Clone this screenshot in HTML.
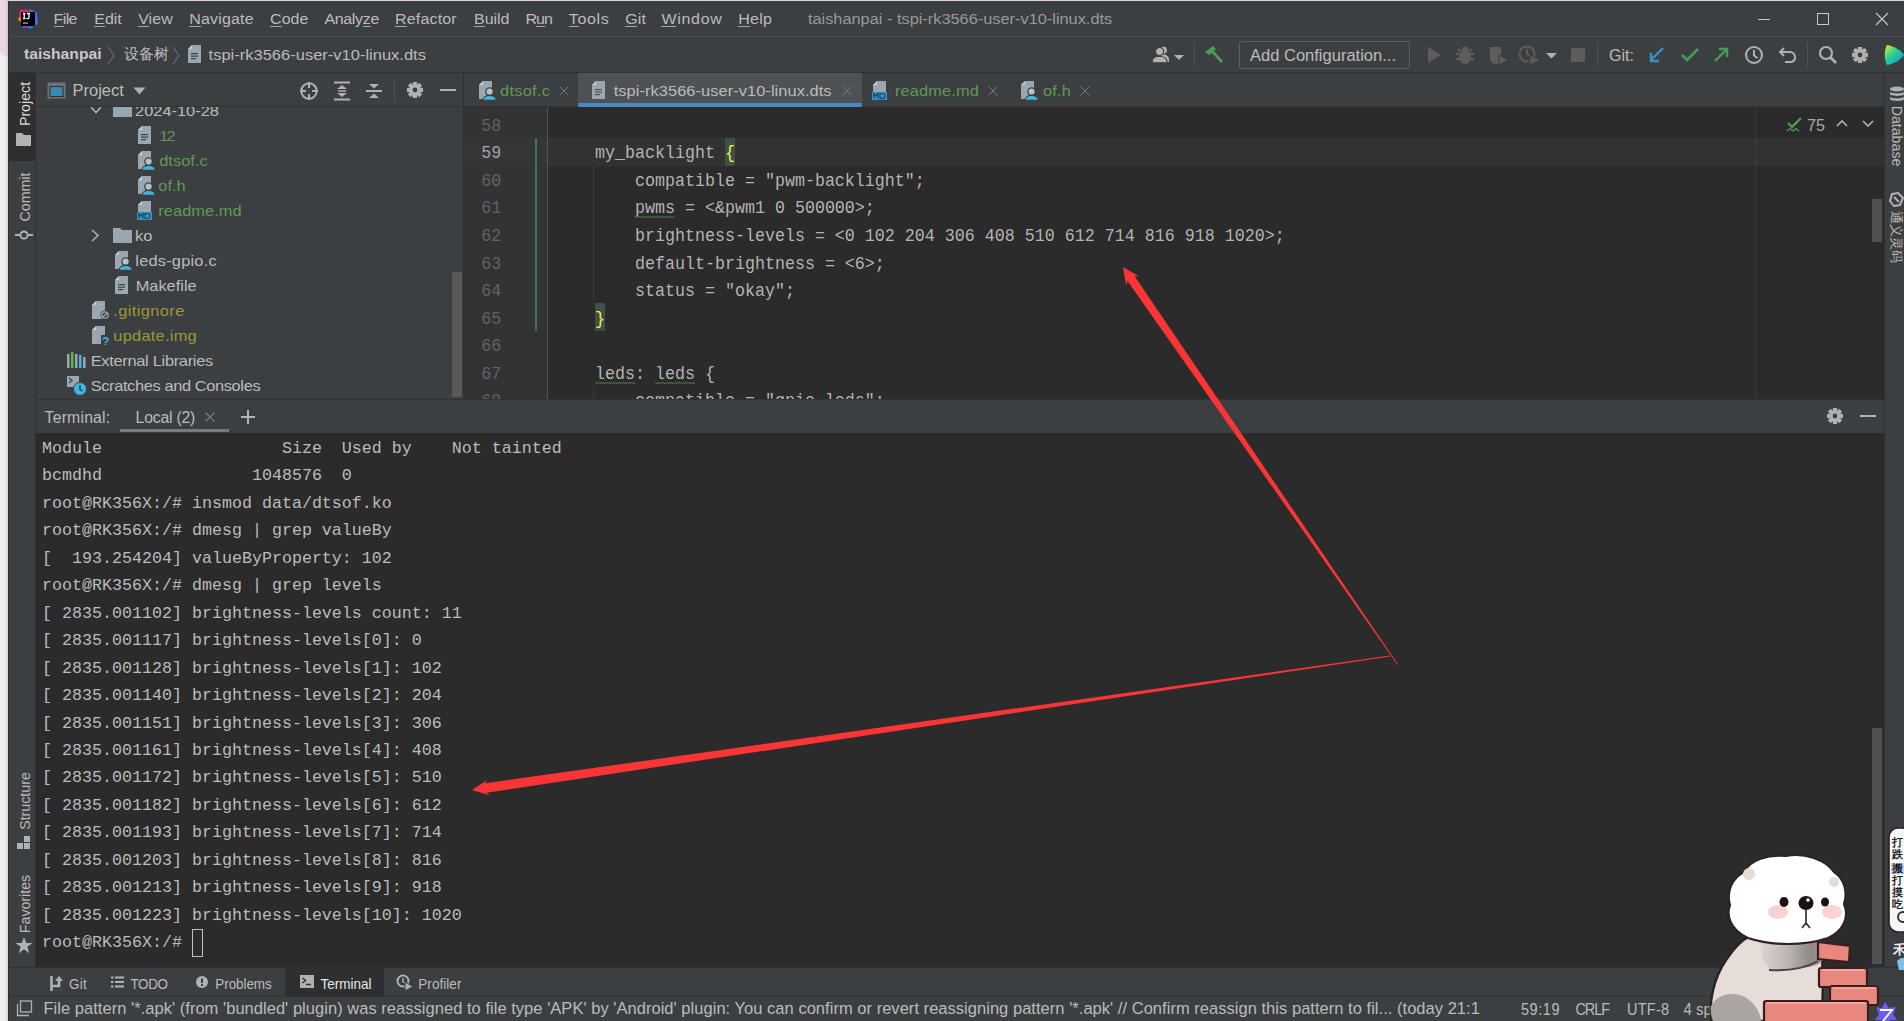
<!DOCTYPE html>
<html><head><meta charset="utf-8">
<style>
*{margin:0;padding:0;box-sizing:border-box}
html,body{width:1904px;height:1021px;overflow:hidden;background:#ecdde5;font-family:"Liberation Sans",sans-serif;}
.a{position:absolute}
.t{font-family:"Liberation Sans",sans-serif;white-space:pre;color:#bbbbbb}
.m{font-family:"Liberation Mono",monospace;white-space:pre;color:#bbbbbb}
.br{color:#ffef28}
.sq{text-decoration:underline wavy #4f7a47 1px;text-underline-offset:3px}
</style></head>
<body>
<div class="a" style="left:0px;top:0px;width:8px;height:1021px;background:#eeeded;"></div>
<div class="a" style="left:0px;top:0px;width:8px;height:56px;background:#e9d8e2;border-bottom-left-radius:6px"></div>
<div class="a" style="left:0px;top:0px;width:1904px;height:1px;background:#e6d2dd;"></div>
<div class="a" style="left:5px;top:0px;width:3px;height:1021px;background:linear-gradient(90deg,rgba(0,0,0,0),rgba(0,0,0,0.10));"></div>
<div class="a" style="left:8px;top:1px;width:1896px;height:1020px;background:#3c3f41;"></div>
<div class="a" style="left:8px;top:1px;width:1px;height:1020px;background:#2f3133;"></div>
<div class="a" style="left:9px;top:36px;width:1895px;height:1px;background:#4b4d4e;"></div>
<div class="a" style="left:9px;top:72px;width:1895px;height:1px;background:#323232;"></div>
<div class="a t" style="left:53.6px;top:-0.60px;height:40px;line-height:40px;font-size:16.00px;color:#bbbbbb;transform:scaleY(0.960);transform-origin:0 50%;letter-spacing:-0.628px;">File</div>
<div class="a" style="left:54px;top:26px;width:10px;height:1px;background:#a9a9a9;"></div>
<div class="a t" style="left:94.3px;top:-0.60px;height:40px;line-height:40px;font-size:16.00px;color:#bbbbbb;transform:scaleY(0.960);transform-origin:0 50%;letter-spacing:-0.024px;">Edit</div>
<div class="a" style="left:94px;top:26px;width:11px;height:1px;background:#a9a9a9;"></div>
<div class="a t" style="left:138.2px;top:-0.60px;height:40px;line-height:40px;font-size:16.00px;color:#bbbbbb;transform:scaleY(0.960);transform-origin:0 50%;letter-spacing:0.036px;">View</div>
<div class="a" style="left:138px;top:26px;width:11px;height:1px;background:#a9a9a9;"></div>
<div class="a t" style="left:189.3px;top:-0.60px;height:40px;line-height:40px;font-size:16.00px;color:#bbbbbb;transform:scaleY(0.960);transform-origin:0 50%;letter-spacing:0.164px;">Navigate</div>
<div class="a" style="left:189px;top:26px;width:12px;height:1px;background:#a9a9a9;"></div>
<div class="a t" style="left:270.0px;top:-0.60px;height:40px;line-height:40px;font-size:16.00px;color:#bbbbbb;transform:scaleY(0.960);transform-origin:0 50%;letter-spacing:0.083px;">Code</div>
<div class="a" style="left:270px;top:26px;width:12px;height:1px;background:#a9a9a9;"></div>
<div class="a t" style="left:324.4px;top:-0.60px;height:40px;line-height:40px;font-size:16.00px;color:#bbbbbb;transform:scaleY(0.960);transform-origin:0 50%;letter-spacing:-0.337px;">Analyze</div>
<div class="a" style="left:363px;top:26px;width:8px;height:1px;background:#a9a9a9;"></div>
<div class="a t" style="left:395.1px;top:-0.60px;height:40px;line-height:40px;font-size:16.00px;color:#bbbbbb;transform:scaleY(0.960);transform-origin:0 50%;letter-spacing:0.147px;">Refactor</div>
<div class="a" style="left:395px;top:26px;width:12px;height:1px;background:#a9a9a9;"></div>
<div class="a t" style="left:474.0px;top:-0.60px;height:40px;line-height:40px;font-size:16.00px;color:#bbbbbb;transform:scaleY(0.960);transform-origin:0 50%;letter-spacing:-0.045px;">Build</div>
<div class="a" style="left:474px;top:26px;width:11px;height:1px;background:#a9a9a9;"></div>
<div class="a t" style="left:525.6px;top:-0.60px;height:40px;line-height:40px;font-size:16.00px;color:#bbbbbb;transform:scaleY(0.960);transform-origin:0 50%;letter-spacing:-1.076px;">Run</div>
<div class="a" style="left:536px;top:26px;width:9px;height:1px;background:#a9a9a9;"></div>
<div class="a t" style="left:568.8px;top:-0.60px;height:40px;line-height:40px;font-size:16.00px;color:#bbbbbb;transform:scaleY(0.960);transform-origin:0 50%;letter-spacing:0.662px;">Tools</div>
<div class="a" style="left:569px;top:26px;width:10px;height:1px;background:#a9a9a9;"></div>
<div class="a t" style="left:625.2px;top:-0.60px;height:40px;line-height:40px;font-size:16.00px;color:#bbbbbb;transform:scaleY(0.960);transform-origin:0 50%;letter-spacing:0.177px;">Git</div>
<div class="a" style="left:625px;top:26px;width:12px;height:1px;background:#a9a9a9;"></div>
<div class="a t" style="left:661.4px;top:-0.60px;height:40px;line-height:40px;font-size:16.00px;color:#bbbbbb;transform:scaleY(0.960);transform-origin:0 50%;letter-spacing:0.698px;">Window</div>
<div class="a" style="left:661px;top:26px;width:15px;height:1px;background:#a9a9a9;"></div>
<div class="a t" style="left:738.2px;top:-0.60px;height:40px;line-height:40px;font-size:16.00px;color:#bbbbbb;transform:scaleY(0.960);transform-origin:0 50%;letter-spacing:0.297px;">Help</div>
<div class="a" style="left:738px;top:26px;width:12px;height:1px;background:#a9a9a9;"></div>
<div class="a t" style="left:807.9px;top:-1.20px;height:40px;line-height:40px;font-size:16.35px;color:#999999;transform:scaleY(0.887);transform-origin:0 50%;">taishanpai - tspi-rk3566-user-v10-linux.dts</div>
<svg class="a" style="left:17px;top:8px" width="22" height="22" viewBox="0 0 22 22">
<polygon points="3,2 10,1.5 13,4 8,9 2,9" fill="#f21d6b"/>
<polygon points="1,10 6,8 6,14 2,13" fill="#f97a12"/>
<polygon points="12.5,1 20,4.5 21,16 13,21 9,18" fill="#3d6ff2"/>
<polygon points="4,15 10,14 12,19 6,20" fill="#a53ce0"/>
<rect x="4" y="4" width="14" height="14" fill="#000"/>
<path d="M6 5.5H8.5M7.2 5.5V10.5M6 10.5H8.5M10 5.5H13M12 5.5V9.5C12 11 10 11 9.5 10" stroke="#fff" stroke-width="1.3" fill="none"/>
<rect x="6" y="14.5" width="5" height="1.2" fill="#bbb"/></svg>
<div class="a" style="left:1758px;top:19px;width:12px;height:1px;background:#c8c8c8;"></div>
<div class="a" style="left:1817px;top:13px;width:12px;height:12px;background:transparent;border:1px solid #c8c8c8"></div>
<svg class="a" style="left:1875px;top:12px" width="14" height="14" viewBox="0 0 14 14"><path d="M1 1L13 13M13 1L1 13" stroke="#c8c8c8" stroke-width="1.1"/></svg>
<div class="a t" style="left:24.0px;top:34.40px;height:40px;line-height:40px;font-size:15.69px;color:#c8c8c8;font-weight:bold;transform:scaleY(0.979);transform-origin:0 50%;">taishanpai</div>
<svg class="a" style="left:107px;top:46px" width="9" height="19" viewBox="0 0 9 19"><path d="M1 1L7 9.5L1 18" stroke="#6e6e6e" stroke-width="1.1" fill="none"/></svg>
<div class="a t" style="left:123.5px;top:42px;height:24px;line-height:24px;font-size:14.7px;color:#bbbbbb">设备树</div>
<svg class="a" style="left:172px;top:46px" width="9" height="19" viewBox="0 0 9 19"><path d="M1 1L7 9.5L1 18" stroke="#6e6e6e" stroke-width="1.1" fill="none"/></svg>
<svg class="a" style="left:188px;top:45px" width="13" height="18" viewBox="0 0 13 18"><path d="M4 0H13V18H0V4Z" fill="#9aa7b0"/><path d="M0 4H4V0Z" fill="#c3ccd2"/><rect x="3" y="8" width="7" height="1.2" fill="#3c3f41"/><rect x="3" y="10.5" width="7" height="1.2" fill="#3c3f41"/><rect x="3" y="13" width="5" height="1.2" fill="#3c3f41"/></svg>
<div class="a t" style="left:208.6px;top:34.60px;height:40px;line-height:40px;font-size:16.50px;color:#bbbbbb;transform:scaleY(0.914);transform-origin:0 50%;">tspi-rk3566-user-v10-linux.dts</div>
<svg class="a" style="left:1152px;top:46px" width="34" height="18" viewBox="0 0 34 18"><circle cx="11.5" cy="4.2" r="3.4" fill="#afb1b3"/><path d="M9 16V10.5C9 9 10 8.5 11.5 8.5C14.5 8.5 17 10.5 17 13.5V16Z" fill="#afb1b3"/>
<circle cx="7.5" cy="5.5" r="4.1" fill="#afb1b3" stroke="#3c3f41" stroke-width="1.2"/><path d="M0 16.8C0 12.5 3 10.5 6 10.5H9C12 10.5 15 12.5 15 16.8Z" fill="#afb1b3" stroke="#3c3f41" stroke-width="1.2"/>
<path d="M22 9H32L27 14Z" fill="#afb1b3"/></svg>
<div class="a" style="left:1194px;top:43px;width:1px;height:24px;background:#515151;"></div>
<svg class="a" style="left:1204px;top:45px" width="22" height="20" viewBox="0 0 22 20"><path d="M1 7L9 1L12 4L10 6L19 16L17 18L8 8L5 10Z" fill="#499c54"/></svg>
<div class="a" style="left:1239px;top:41px;width:171px;height:28px;background:transparent;border:1px solid #5e6060;border-radius:3px"></div>
<div class="a t" style="left:1250.0px;top:35.50px;height:40px;line-height:40px;font-size:16.52px;color:#bbbbbb;transform:scaleY(0.965);transform-origin:0 50%;">Add Configuration...</div>
<svg class="a" style="left:1426px;top:46px" width="16" height="18" viewBox="0 0 16 18"><path d="M2 1L15 9L2 17Z" fill="#5b5d5f"/></svg>
<svg class="a" style="left:1455px;top:45px" width="20" height="20" viewBox="0 0 20 20"><ellipse cx="10" cy="12" rx="6" ry="7" fill="#5b5d5f"/><circle cx="10" cy="5" r="3.5" fill="#5b5d5f"/><path d="M1 9H19M1 14H19M3 4L6 7M17 4L14 7" stroke="#5b5d5f" stroke-width="2"/></svg>
<svg class="a" style="left:1488px;top:45px" width="22" height="22" viewBox="0 0 22 22"><path d="M2 2H13V14C13 17 9 19 7.5 19C6 19 2 17 2 14Z" fill="#5b5d5f"/><path d="M11 10L20 15L11 20Z" fill="#5b5d5f" stroke="#3c3f41"/></svg>
<svg class="a" style="left:1518px;top:44px" width="24" height="22" viewBox="0 0 24 22"><circle cx="9" cy="10" r="7.5" fill="none" stroke="#5b5d5f" stroke-width="2"/><path d="M9 5V10L12 12" stroke="#5b5d5f" stroke-width="2" fill="none"/><path d="M12 11L22 16L12 21Z" fill="#5b5d5f" stroke="#3c3f41"/></svg>
<svg class="a" style="left:1546px;top:52px" width="12" height="7" viewBox="0 0 12 7"><path d="M0 1H11L5.5 6.5Z" fill="#afb1b3"/></svg>
<div class="a" style="left:1571px;top:48px;width:14px;height:14px;background:#5b5d5f;"></div>
<div class="a" style="left:1597px;top:43px;width:1px;height:24px;background:#515151;"></div>
<div class="a t" style="left:1609.0px;top:35.20px;height:40px;line-height:40px;font-size:16.07px;color:#bbbbbb;transform:scaleY(0.992);transform-origin:0 50%;">Git:</div>
<svg class="a" style="left:1648px;top:46px" width="18" height="18" viewBox="0 0 18 18"><path d="M15 2L3 14M3 7V15H11" stroke="#3592c4" stroke-width="2.4" fill="none"/></svg>
<svg class="a" style="left:1680px;top:47px" width="20" height="16" viewBox="0 0 20 16"><path d="M2 8L7 13L18 2" stroke="#499c54" stroke-width="2.6" fill="none"/></svg>
<svg class="a" style="left:1712px;top:46px" width="18" height="18" viewBox="0 0 18 18"><path d="M3 15L15 3M7 3H15V11" stroke="#499c54" stroke-width="2.4" fill="none"/></svg>
<svg class="a" style="left:1744px;top:45px" width="20" height="20" viewBox="0 0 20 20"><circle cx="10" cy="10" r="8" fill="none" stroke="#afb1b3" stroke-width="2"/><path d="M10 5V10.5L13.5 13" stroke="#afb1b3" stroke-width="2" fill="none"/></svg>
<svg class="a" style="left:1778px;top:45px" width="20" height="20" viewBox="0 0 20 20"><path d="M6 3L2 7L6 11M2 7H12C15 7 17 9.5 17 12C17 15 15 17 12 17H7" stroke="#afb1b3" stroke-width="2" fill="none"/></svg>
<div class="a" style="left:1807px;top:43px;width:1px;height:24px;background:#515151;"></div>
<svg class="a" style="left:1818px;top:45px" width="20" height="20" viewBox="0 0 20 20"><circle cx="8" cy="8" r="6" fill="none" stroke="#afb1b3" stroke-width="2.2"/><path d="M12.5 12.5L18 18" stroke="#afb1b3" stroke-width="2.6"/></svg>
<svg class="a" style="left:1852px;top:47px" width="16" height="16" viewBox="0 0 16 16"><rect x="5.90" y="0" width="4.2" height="4.48" fill="#afb1b3" transform="rotate(0 8.0 8.0)"/><rect x="5.90" y="0" width="4.2" height="4.48" fill="#afb1b3" transform="rotate(45 8.0 8.0)"/><rect x="5.90" y="0" width="4.2" height="4.48" fill="#afb1b3" transform="rotate(90 8.0 8.0)"/><rect x="5.90" y="0" width="4.2" height="4.48" fill="#afb1b3" transform="rotate(135 8.0 8.0)"/><rect x="5.90" y="0" width="4.2" height="4.48" fill="#afb1b3" transform="rotate(180 8.0 8.0)"/><rect x="5.90" y="0" width="4.2" height="4.48" fill="#afb1b3" transform="rotate(225 8.0 8.0)"/><rect x="5.90" y="0" width="4.2" height="4.48" fill="#afb1b3" transform="rotate(270 8.0 8.0)"/><rect x="5.90" y="0" width="4.2" height="4.48" fill="#afb1b3" transform="rotate(315 8.0 8.0)"/><circle cx="8.0" cy="8.0" r="5.76" fill="#afb1b3"/><circle cx="8.0" cy="8.0" r="2.40" fill="#3c3f41"/></svg>
<svg class="a" style="left:1884px;top:44px" width="20" height="22" viewBox="0 0 20 22"><defs><linearGradient id="lg1" x1="0" y1="0" x2="1" y2="1"><stop offset="0" stop-color="#f5e92a"/><stop offset=".4" stop-color="#2fd38b"/><stop offset="1" stop-color="#0d8ae6"/></linearGradient></defs><path d="M3 1C10 2 18 7 20 11C18 15 10 20 3 21C0 16 0 6 3 1Z" fill="url(#lg1)"/></svg>
<div class="a" style="left:9px;top:73px;width:27px;height:895px;background:#3c3f41;"></div>
<div class="a" style="left:35px;top:73px;width:1px;height:895px;background:#323232;"></div>
<div class="a" style="left:9px;top:73px;width:26px;height:88px;background:#2d2f30;"></div>
<div class="a t" style="left:24.5px;top:103.5px;height:23px;line-height:23px;font-size:14.2px;color:#dddddd;transform:translate(-50%,-50%) rotate(-90deg)">Project</div>
<svg class="a" style="left:16px;top:133px" width="16" height="13" viewBox="0 0 16 13"><path d="M0 0H6L8 2H15V13H0Z" fill="#afb1b3"/></svg>
<div class="a t" style="left:24.5px;top:196.5px;height:23px;line-height:23px;font-size:14.2px;color:#bbbbbb;transform:translate(-50%,-50%) rotate(-90deg)">Commit</div>
<svg class="a" style="left:15px;top:229px" width="18" height="12" viewBox="0 0 18 12"><circle cx="9" cy="6" r="3.6" fill="none" stroke="#afb1b3" stroke-width="2"/><path d="M0 6H5M13 6H18" stroke="#afb1b3" stroke-width="2"/></svg>
<div class="a t" style="left:24.5px;top:801px;height:23px;line-height:23px;font-size:14.2px;color:#bbbbbb;transform:translate(-50%,-50%) rotate(-90deg)">Structure</div>
<svg class="a" style="left:17px;top:836px" width="14" height="14" viewBox="0 0 14 14"><rect x="7" y="0" width="6" height="6" fill="#afb1b3"/><rect x="0" y="7" width="6" height="6" fill="#afb1b3"/><rect x="7" y="7" width="6" height="6" fill="#afb1b3"/></svg>
<div class="a t" style="left:24.5px;top:904px;height:23px;line-height:23px;font-size:14.2px;color:#bbbbbb;transform:translate(-50%,-50%) rotate(-90deg)">Favorites</div>
<svg class="a" style="left:15px;top:937px" width="18" height="17" viewBox="0 0 18 17"><path d="M9 0L11.2 6H17.5L12.4 9.8L14.3 16.2L9 12.3L3.7 16.2L5.6 9.8L0.5 6H6.8Z" fill="#afb1b3"/></svg>
<div class="a" style="left:36px;top:106px;width:428px;height:1px;background:#323232;"></div>
<div class="a" style="left:463px;top:73px;width:1px;height:327px;background:#323232;"></div>
<svg class="a" style="left:47px;top:82px" width="19" height="17" viewBox="0 0 19 17"><rect x="0.5" y="0.5" width="18" height="16" fill="#6e7476"/><rect x="2.5" y="4" width="14" height="11" fill="#2c2e2f"/><rect x="3.5" y="5" width="12" height="9" fill="#3b8bb0"/></svg>
<div class="a t" style="left:72.5px;top:69.80px;height:40px;line-height:40px;font-size:16.48px;color:#bbbbbb;transform:scaleY(0.967);transform-origin:0 50%;">Project</div>
<svg class="a" style="left:133px;top:87px" width="13" height="8" viewBox="0 0 13 8"><path d="M0.5 0.5H12.5L6.5 7.5Z" fill="#afb1b3"/></svg>
<svg class="a" style="left:299px;top:81px" width="20" height="20" viewBox="0 0 20 20"><circle cx="10" cy="10" r="7.7" fill="none" stroke="#afb1b3" stroke-width="2"/><path d="M10 1V7M10 13V19M1 10H7M13 10H19" stroke="#afb1b3" stroke-width="2"/></svg>
<svg class="a" style="left:333px;top:81px" width="18" height="20" viewBox="0 0 18 20"><path d="M1 1.5H17M1 18.5H17" stroke="#afb1b3" stroke-width="2.2"/><path d="M4 8L9 4L14 8ZM4 12L9 16L14 12Z" fill="#afb1b3"/><path d="M5 10H13" stroke="#afb1b3" stroke-width="1.5"/></svg>
<svg class="a" style="left:365px;top:81px" width="18" height="20" viewBox="0 0 18 20"><path d="M1 10H17" stroke="#afb1b3" stroke-width="2"/><path d="M4 3L9 7.5L14 3ZM4 17L9 12.5L14 17Z" fill="#afb1b3"/></svg>
<div class="a" style="left:394px;top:80px;width:1px;height:22px;background:#515151;"></div>
<svg class="a" style="left:407px;top:82px" width="16" height="16" viewBox="0 0 16 16"><rect x="5.90" y="0" width="4.2" height="4.48" fill="#afb1b3" transform="rotate(0 8.0 8.0)"/><rect x="5.90" y="0" width="4.2" height="4.48" fill="#afb1b3" transform="rotate(45 8.0 8.0)"/><rect x="5.90" y="0" width="4.2" height="4.48" fill="#afb1b3" transform="rotate(90 8.0 8.0)"/><rect x="5.90" y="0" width="4.2" height="4.48" fill="#afb1b3" transform="rotate(135 8.0 8.0)"/><rect x="5.90" y="0" width="4.2" height="4.48" fill="#afb1b3" transform="rotate(180 8.0 8.0)"/><rect x="5.90" y="0" width="4.2" height="4.48" fill="#afb1b3" transform="rotate(225 8.0 8.0)"/><rect x="5.90" y="0" width="4.2" height="4.48" fill="#afb1b3" transform="rotate(270 8.0 8.0)"/><rect x="5.90" y="0" width="4.2" height="4.48" fill="#afb1b3" transform="rotate(315 8.0 8.0)"/><circle cx="8.0" cy="8.0" r="5.76" fill="#afb1b3"/><circle cx="8.0" cy="8.0" r="2.40" fill="#3c3f41"/></svg>
<div class="a" style="left:440px;top:89px;width:16px;height:2px;background:#afb1b3;"></div>
<div class="a" style="left:36px;top:107px;width:427px;height:292px;overflow:hidden"><div style="position:absolute;left:-36px;top:-107px">
<svg class="a" style="left:90px;top:106px" width="12" height="8" viewBox="0 0 12 8"><path d="M1 1L6 6.5L11 1" stroke="#afb1b3" stroke-width="1.6" fill="none"/></svg>
<svg class="a" style="left:113px;top:101px" width="19" height="16" viewBox="0 0 19 16"><path d="M0 1H7L9 3H19V16H0Z" fill="#9aa7b0"/></svg>
<div class="a t" style="left:135.0px;top:89.60px;height:40px;line-height:40px;font-size:16.40px;color:#bbbbbb;transform:scaleY(0.928);transform-origin:0 50%;letter-spacing:0.012px;">2024-10-28</div>
<svg class="a" style="left:136.5px;top:125px" width="20" height="20" viewBox="-1 -1 20 20"><path d="M4 0H13V18H0V4Z" fill="#9aa7b0"/><path d="M0 4H4V0Z" fill="#c3ccd2"/><rect x="3" y="8" width="7" height="1.2" fill="#3c3f41"/><rect x="3" y="10.5" width="7" height="1.2" fill="#3c3f41"/><rect x="3" y="13" width="5" height="1.2" fill="#3c3f41"/></svg>
<div class="a t" style="left:159.2px;top:114.60px;height:40px;line-height:40px;font-size:16.40px;color:#629755;transform:scaleY(0.928);transform-origin:0 50%;letter-spacing:-1.842px;">12</div>
<svg class="a" style="left:136.5px;top:150px" width="20" height="20" viewBox="-1 -1 20 20"><path d="M4 0H13V18H0V4Z" fill="#9aa7b0"/><path d="M0 4H4V0Z" fill="#c3ccd2"/><circle cx="10.6" cy="10.6" r="4.4" fill="#3c3f41"/><circle cx="10.6" cy="10.6" r="3.1" fill="#b9c0c5"/><path d="M4 19.3C4 16.2 7 14.4 10.6 14.4C14.2 14.4 17.2 16.2 17.2 19.3Z" fill="#40b6e0" stroke="#3c3f41" stroke-width="1.1"/></svg>
<div class="a t" style="left:159.2px;top:139.60px;height:40px;line-height:40px;font-size:16.40px;color:#629755;transform:scaleY(0.928);transform-origin:0 50%;letter-spacing:0.032px;">dtsof.c</div>
<svg class="a" style="left:136.5px;top:175px" width="20" height="20" viewBox="-1 -1 20 20"><path d="M4 0H13V18H0V4Z" fill="#9aa7b0"/><path d="M0 4H4V0Z" fill="#c3ccd2"/><circle cx="10.6" cy="10.6" r="4.4" fill="#3c3f41"/><circle cx="10.6" cy="10.6" r="3.1" fill="#b9c0c5"/><path d="M4 19.3C4 16.2 7 14.4 10.6 14.4C14.2 14.4 17.2 16.2 17.2 19.3Z" fill="#40b6e0" stroke="#3c3f41" stroke-width="1.1"/></svg>
<div class="a t" style="left:158.3px;top:164.60px;height:40px;line-height:40px;font-size:16.40px;color:#629755;transform:scaleY(0.928);transform-origin:0 50%;letter-spacing:0.015px;">of.h</div>
<svg class="a" style="left:136.5px;top:200px" width="20" height="20" viewBox="-1 -1 20 20"><path d="M4 0H13V18H0V4Z" fill="#9aa7b0"/><path d="M0 4H4V0Z" fill="#c3ccd2"/><rect x="-1" y="11" width="15" height="8" fill="#3592c4"/><path d="M1 17.5V12.5L3 15L5 12.5V17.5M7 12.5V17.5H9.5C11.5 17.5 12 16 12 15C12 14 11.5 12.5 9.5 12.5Z" stroke="#1d4058" stroke-width="1.1" fill="none"/></svg>
<div class="a t" style="left:158.3px;top:189.60px;height:40px;line-height:40px;font-size:16.40px;color:#629755;transform:scaleY(0.928);transform-origin:0 50%;letter-spacing:0.056px;">readme.md</div>
<svg class="a" style="left:114px;top:250px" width="20" height="20" viewBox="-1 -1 20 20"><path d="M4 0H13V18H0V4Z" fill="#9aa7b0"/><path d="M0 4H4V0Z" fill="#c3ccd2"/><circle cx="10.6" cy="10.6" r="4.4" fill="#3c3f41"/><circle cx="10.6" cy="10.6" r="3.1" fill="#b9c0c5"/><path d="M4 19.3C4 16.2 7 14.4 10.6 14.4C14.2 14.4 17.2 16.2 17.2 19.3Z" fill="#40b6e0" stroke="#3c3f41" stroke-width="1.1"/></svg>
<div class="a t" style="left:135.3px;top:239.60px;height:40px;line-height:40px;font-size:16.40px;color:#bbbbbb;transform:scaleY(0.928);transform-origin:0 50%;letter-spacing:0.209px;">leds-gpio.c</div>
<svg class="a" style="left:114px;top:275px" width="20" height="20" viewBox="-1 -1 20 20"><path d="M4 0H13V18H0V4Z" fill="#9aa7b0"/><path d="M0 4H4V0Z" fill="#c3ccd2"/><rect x="3" y="8" width="7" height="1.2" fill="#3c3f41"/><rect x="3" y="10.5" width="7" height="1.2" fill="#3c3f41"/><rect x="3" y="13" width="5" height="1.2" fill="#3c3f41"/></svg>
<div class="a t" style="left:135.7px;top:264.60px;height:40px;line-height:40px;font-size:16.40px;color:#bbbbbb;transform:scaleY(0.928);transform-origin:0 50%;letter-spacing:-0.010px;">Makefile</div>
<svg class="a" style="left:91px;top:300px" width="20" height="20" viewBox="-1 -1 20 20"><path d="M4 0H13V18H0V4Z" fill="#9aa7b0"/><path d="M0 4H4V0Z" fill="#c3ccd2"/><circle cx="13" cy="14" r="4.6" fill="#3c3f41"/><circle cx="13" cy="14" r="3.2" fill="none" stroke="#9aa7b0" stroke-width="1.3"/><path d="M10.7 16.3L15.3 11.7" stroke="#9aa7b0" stroke-width="1.3"/></svg>
<div class="a t" style="left:113.3px;top:289.60px;height:40px;line-height:40px;font-size:16.40px;color:#999a35;transform:scaleY(0.928);transform-origin:0 50%;letter-spacing:0.392px;">.gitignore</div>
<svg class="a" style="left:91px;top:325px" width="20" height="20" viewBox="-1 -1 20 20"><path d="M4 0H13V18H0V4Z" fill="#9aa7b0"/><path d="M0 4H4V0Z" fill="#c3ccd2"/><rect x="9" y="9" width="10" height="11" fill="#3c3f41"/><text x="10" y="20" font-family="Liberation Sans" font-size="12" font-weight="bold" fill="#40b6e0">?</text></svg>
<div class="a t" style="left:113.3px;top:314.60px;height:40px;line-height:40px;font-size:16.40px;color:#999a35;transform:scaleY(0.928);transform-origin:0 50%;letter-spacing:0.251px;">update.img</div>
<svg class="a" style="left:90px;top:229px" width="10" height="13" viewBox="0 0 10 13"><path d="M2 1L8 6.5L2 12" stroke="#afb1b3" stroke-width="1.6" fill="none"/></svg>
<svg class="a" style="left:113px;top:227px" width="19" height="16" viewBox="0 0 19 16"><path d="M0 1H7L9 3H19V16H0Z" fill="#9aa7b0"/></svg>
<div class="a t" style="left:135.0px;top:214.60px;height:40px;line-height:40px;font-size:16.40px;color:#bbbbbb;transform:scaleY(0.928);transform-origin:0 50%;letter-spacing:-0.021px;">ko</div>
<svg class="a" style="left:67px;top:351px" width="19" height="18" viewBox="0 0 19 18"><rect x="0" y="3" width="2.5" height="14" fill="#9aa7b0"/><rect x="4" y="1" width="2.5" height="16" fill="#62b543"/><rect x="8" y="3" width="2.5" height="14" fill="#9aa7b0"/><rect x="12" y="4" width="2.5" height="13" fill="#40b6e0"/><rect x="16" y="6" width="2.5" height="11" fill="#9aa7b0"/></svg>
<div class="a t" style="left:90.7px;top:339.60px;height:40px;line-height:40px;font-size:16.40px;color:#bbbbbb;transform:scaleY(0.928);transform-origin:0 50%;letter-spacing:-0.295px;">External Libraries</div>
<svg class="a" style="left:66px;top:375px" width="21" height="21" viewBox="0 0 21 21"><rect x="1" y="1" width="12" height="11" fill="#9aa7b0"/><path d="M3 3L6 5.5L3 8" stroke="#3c3f41" stroke-width="1.3" fill="none"/><circle cx="14" cy="14" r="6.5" fill="#40b6e0" stroke="#3c3f41" stroke-width="1"/><path d="M14 10V14.5L16.5 16" stroke="#1c3e52" stroke-width="1.4" fill="none"/></svg>
<div class="a t" style="left:90.7px;top:364.60px;height:40px;line-height:40px;font-size:16.40px;color:#bbbbbb;transform:scaleY(0.928);transform-origin:0 50%;letter-spacing:-0.370px;">Scratches and Consoles</div>
<div class="a" style="left:452px;top:272px;width:10px;height:125px;background:#58595b;"></div>
</div></div>
<div class="a" style="left:464px;top:106px;width:1421px;height:1px;background:#323232;"></div>
<div class="a" style="left:578px;top:73px;width:284px;height:34px;background:#4e5254;"></div>
<div class="a" style="left:578px;top:103px;width:284px;height:4px;background:#4a88c7;"></div>
<svg class="a" style="left:478px;top:80px" width="20" height="20" viewBox="-1 -1 20 20"><path d="M4 0H13V18H0V4Z" fill="#9aa7b0"/><path d="M0 4H4V0Z" fill="#c3ccd2"/><circle cx="10.6" cy="10.6" r="4.4" fill="#3c3f41"/><circle cx="10.6" cy="10.6" r="3.1" fill="#b9c0c5"/><path d="M4 19.3C4 16.2 7 14.4 10.6 14.4C14.2 14.4 17.2 16.2 17.2 19.3Z" fill="#40b6e0" stroke="#3c3f41" stroke-width="1.1"/></svg>
<div class="a t" style="left:500.0px;top:69.50px;height:40px;line-height:40px;font-size:16.40px;color:#629755;transform:scaleY(0.928);transform-origin:0 50%;letter-spacing:0.282px;">dtsof.c</div>
<svg class="a" style="left:559px;top:86px" width="10" height="10" viewBox="0 0 10 10"><path d="M0.5 0.5L9.5 9.5M9.5 0.5L0.5 9.5" stroke="#76787a" stroke-width="1.0"/></svg>
<svg class="a" style="left:591px;top:80px" width="20" height="20" viewBox="-1 -1 20 20"><path d="M4 0H13V18H0V4Z" fill="#9aa7b0"/><path d="M0 4H4V0Z" fill="#c3ccd2"/><rect x="3" y="8" width="7" height="1.2" fill="#4e5254"/><rect x="3" y="10.5" width="7" height="1.2" fill="#4e5254"/><rect x="3" y="13" width="5" height="1.2" fill="#4e5254"/></svg>
<div class="a t" style="left:613.7px;top:69.50px;height:40px;line-height:40px;font-size:16.40px;color:#bbbbbb;transform:scaleY(0.928);transform-origin:0 50%;letter-spacing:0.068px;">tspi-rk3566-user-v10-linux.dts</div>
<svg class="a" style="left:842px;top:86px" width="10" height="10" viewBox="0 0 10 10"><path d="M0.5 0.5L9.5 9.5M9.5 0.5L0.5 9.5" stroke="#76787a" stroke-width="1.0"/></svg>
<svg class="a" style="left:872px;top:80px" width="20" height="20" viewBox="-1 -1 20 20"><path d="M4 0H13V18H0V4Z" fill="#9aa7b0"/><path d="M0 4H4V0Z" fill="#c3ccd2"/><rect x="-1" y="11" width="15" height="8" fill="#3592c4"/><path d="M1 17.5V12.5L3 15L5 12.5V17.5M7 12.5V17.5H9.5C11.5 17.5 12 16 12 15C12 14 11.5 12.5 9.5 12.5Z" stroke="#1d4058" stroke-width="1.1" fill="none"/></svg>
<div class="a t" style="left:895.0px;top:69.50px;height:40px;line-height:40px;font-size:16.40px;color:#629755;transform:scaleY(0.928);transform-origin:0 50%;letter-spacing:0.131px;">readme.md</div>
<svg class="a" style="left:988px;top:86px" width="10" height="10" viewBox="0 0 10 10"><path d="M0.5 0.5L9.5 9.5M9.5 0.5L0.5 9.5" stroke="#76787a" stroke-width="1.0"/></svg>
<svg class="a" style="left:1020px;top:80px" width="20" height="20" viewBox="-1 -1 20 20"><path d="M4 0H13V18H0V4Z" fill="#9aa7b0"/><path d="M0 4H4V0Z" fill="#c3ccd2"/><circle cx="10.6" cy="10.6" r="4.4" fill="#3c3f41"/><circle cx="10.6" cy="10.6" r="3.1" fill="#b9c0c5"/><path d="M4 19.3C4 16.2 7 14.4 10.6 14.4C14.2 14.4 17.2 16.2 17.2 19.3Z" fill="#40b6e0" stroke="#3c3f41" stroke-width="1.1"/></svg>
<div class="a t" style="left:1043.0px;top:69.50px;height:40px;line-height:40px;font-size:16.40px;color:#629755;transform:scaleY(0.928);transform-origin:0 50%;letter-spacing:0.215px;">of.h</div>
<svg class="a" style="left:1080px;top:86px" width="10" height="10" viewBox="0 0 10 10"><path d="M0.5 0.5L9.5 9.5M9.5 0.5L0.5 9.5" stroke="#76787a" stroke-width="1.0"/></svg>
<div class="a" style="left:464px;top:107px;width:1421px;height:292px;background:#2b2b2b;"></div>
<div class="a" style="left:464px;top:107px;width:83px;height:292px;background:#313335;"></div>
<div class="a" style="left:547px;top:107px;width:1px;height:292px;background:#555555;"></div>
<div class="a" style="left:464px;top:138px;width:83px;height:28px;background:#343638;"></div>
<div class="a" style="left:548px;top:138px;width:1337px;height:28px;background:#323232;"></div>
<div class="a" style="left:535px;top:138px;width:2px;height:193px;background:#4a6b5f;"></div>
<div class="a" style="left:593px;top:166px;width:1px;height:138px;background:#3a3a3a;"></div>
<div class="a" style="left:593px;top:387px;width:1px;height:12px;background:#3a3a3a;"></div>
<div class="a" style="left:1755px;top:107px;width:1px;height:292px;background:#3a3a3a;"></div>
<div class="a" style="left:725px;top:138px;width:10px;height:28px;background:#3b514d;"></div>
<div class="a" style="left:595px;top:303px;width:10px;height:28px;background:#3b514d;"></div>
<div class="a" style="left:464px;top:107px;width:1421px;height:292px;overflow:hidden"><div style="position:absolute;left:-464px;top:-107px">
<div class="a m" style="left:481.3px;top:112.75px;height:27px;line-height:27px;font-size:16.67px;color:#606366;transform:scaleY(1.059);transform-origin:0 12.25px;">58</div>
<div class="a m" style="left:481.3px;top:140.30px;height:27px;line-height:27px;font-size:16.67px;color:#a4a3a3;transform:scaleY(1.059);transform-origin:0 12.25px;">59</div>
<div class="a m" style="left:555.0px;top:140.30px;height:27px;line-height:27px;font-size:16.67px;color:#b4b4b4;transform:scaleY(1.059);transform-origin:0 12.25px;">    my_backlight <span class="br">{</span></div>
<div class="a m" style="left:481.3px;top:167.85px;height:27px;line-height:27px;font-size:16.67px;color:#606366;transform:scaleY(1.059);transform-origin:0 12.25px;">60</div>
<div class="a m" style="left:555.0px;top:167.85px;height:27px;line-height:27px;font-size:16.67px;color:#b4b4b4;transform:scaleY(1.059);transform-origin:0 12.25px;">        compatible = "pwm-backlight";</div>
<div class="a m" style="left:481.3px;top:195.40px;height:27px;line-height:27px;font-size:16.67px;color:#606366;transform:scaleY(1.059);transform-origin:0 12.25px;">61</div>
<div class="a m" style="left:555.0px;top:195.40px;height:27px;line-height:27px;font-size:16.67px;color:#b4b4b4;transform:scaleY(1.059);transform-origin:0 12.25px;">        pwms = &lt;&amp;pwm1 0 500000&gt;;</div>
<div class="a m" style="left:481.3px;top:222.95px;height:27px;line-height:27px;font-size:16.67px;color:#606366;transform:scaleY(1.059);transform-origin:0 12.25px;">62</div>
<div class="a m" style="left:555.0px;top:222.95px;height:27px;line-height:27px;font-size:16.67px;color:#b4b4b4;transform:scaleY(1.059);transform-origin:0 12.25px;">        brightness-levels = &lt;0 102 204 306 408 510 612 714 816 918 1020&gt;;</div>
<div class="a m" style="left:481.3px;top:250.50px;height:27px;line-height:27px;font-size:16.67px;color:#606366;transform:scaleY(1.059);transform-origin:0 12.25px;">63</div>
<div class="a m" style="left:555.0px;top:250.50px;height:27px;line-height:27px;font-size:16.67px;color:#b4b4b4;transform:scaleY(1.059);transform-origin:0 12.25px;">        default-brightness = &lt;6&gt;;</div>
<div class="a m" style="left:481.3px;top:278.05px;height:27px;line-height:27px;font-size:16.67px;color:#606366;transform:scaleY(1.059);transform-origin:0 12.25px;">64</div>
<div class="a m" style="left:555.0px;top:278.05px;height:27px;line-height:27px;font-size:16.67px;color:#b4b4b4;transform:scaleY(1.059);transform-origin:0 12.25px;">        status = "okay";</div>
<div class="a m" style="left:481.3px;top:305.60px;height:27px;line-height:27px;font-size:16.67px;color:#606366;transform:scaleY(1.059);transform-origin:0 12.25px;">65</div>
<div class="a m" style="left:555.0px;top:305.60px;height:27px;line-height:27px;font-size:16.67px;color:#b4b4b4;transform:scaleY(1.059);transform-origin:0 12.25px;">    <span class="br">}</span></div>
<div class="a m" style="left:481.3px;top:333.15px;height:27px;line-height:27px;font-size:16.67px;color:#606366;transform:scaleY(1.059);transform-origin:0 12.25px;">66</div>
<div class="a m" style="left:481.3px;top:360.70px;height:27px;line-height:27px;font-size:16.67px;color:#606366;transform:scaleY(1.059);transform-origin:0 12.25px;">67</div>
<div class="a m" style="left:555.0px;top:360.70px;height:27px;line-height:27px;font-size:16.67px;color:#b4b4b4;transform:scaleY(1.059);transform-origin:0 12.25px;">    leds: leds {</div>
<div class="a m" style="left:481.3px;top:388.25px;height:27px;line-height:27px;font-size:16.67px;color:#606366;transform:scaleY(1.059);transform-origin:0 12.25px;">68</div>
<div class="a m" style="left:555.0px;top:388.25px;height:27px;line-height:27px;font-size:16.67px;color:#b4b4b4;transform:scaleY(1.059);transform-origin:0 12.25px;">        compatible = "gpio-leds";</div>
</div></div>
<div class="a" style="left:635px;top:216px;width:40px;height:1px;background:repeating-linear-gradient(90deg,#4e7d46 0 1px,transparent 1px 2px);"></div>
<div class="a" style="left:636px;top:217px;width:40px;height:1px;background:repeating-linear-gradient(90deg,#4e7d46 0 1px,transparent 1px 2px);"></div>
<div class="a" style="left:595px;top:382px;width:40px;height:1px;background:repeating-linear-gradient(90deg,#4e7d46 0 1px,transparent 1px 2px);"></div>
<div class="a" style="left:596px;top:383px;width:40px;height:1px;background:repeating-linear-gradient(90deg,#4e7d46 0 1px,transparent 1px 2px);"></div>
<div class="a" style="left:655px;top:382px;width:40px;height:1px;background:repeating-linear-gradient(90deg,#4e7d46 0 1px,transparent 1px 2px);"></div>
<div class="a" style="left:656px;top:383px;width:40px;height:1px;background:repeating-linear-gradient(90deg,#4e7d46 0 1px,transparent 1px 2px);"></div>
<svg class="a" style="left:1786px;top:116px" width="18" height="18" viewBox="0 0 18 18"><path d="M2 7L6 11L15 2" stroke="#499c54" stroke-width="2.4" fill="none"/><path d="M1 15L4 12.5L7 15L10 12.5L13 15" stroke="#499c54" stroke-width="1.3" fill="none"/></svg>
<div class="a t" style="left:1807.0px;top:104.60px;height:40px;line-height:40px;font-size:16.18px;color:#a9a9a9;transform:scaleY(1.003);transform-origin:0 50%;">75</div>
<svg class="a" style="left:1836px;top:119px" width="12" height="8" viewBox="0 0 12 8"><path d="M1 7L6 2L11 7" stroke="#afb1b3" stroke-width="1.6" fill="none"/></svg>
<svg class="a" style="left:1862px;top:120px" width="12" height="8" viewBox="0 0 12 8"><path d="M1 1L6 6L11 1" stroke="#afb1b3" stroke-width="1.6" fill="none"/></svg>
<div class="a" style="left:1872px;top:199px;width:10px;height:43px;background:#4f5254;"></div>
<div class="a" style="left:36px;top:399px;width:1849px;height:1px;background:#323232;"></div>
<div class="a t" style="left:44.6px;top:397.80px;height:40px;line-height:40px;font-size:15.80px;color:#bbbbbb;transform:scaleY(1.000);transform-origin:0 50%;letter-spacing:0.188px;">Terminal:</div>
<div class="a t" style="left:135.6px;top:397.80px;height:40px;line-height:40px;font-size:15.80px;color:#bbbbbb;transform:scaleY(1.000);transform-origin:0 50%;letter-spacing:-0.209px;">Local (2)</div>
<svg class="a" style="left:205px;top:412px" width="10" height="10" viewBox="0 0 10 10"><path d="M0.5 0.5L9.5 9.5M9.5 0.5L0.5 9.5" stroke="#7b7d7f" stroke-width="1.1"/></svg>
<div class="a" style="left:120px;top:429px;width:109px;height:3px;background:#747a80;"></div>
<svg class="a" style="left:241px;top:410px" width="14" height="14" viewBox="0 0 14 14"><path d="M7 0V14M0 7H14" stroke="#afb1b3" stroke-width="2"/></svg>
<svg class="a" style="left:1827px;top:408px" width="16" height="16" viewBox="0 0 16 16"><rect x="5.90" y="0" width="4.2" height="4.48" fill="#afb1b3" transform="rotate(0 8.0 8.0)"/><rect x="5.90" y="0" width="4.2" height="4.48" fill="#afb1b3" transform="rotate(45 8.0 8.0)"/><rect x="5.90" y="0" width="4.2" height="4.48" fill="#afb1b3" transform="rotate(90 8.0 8.0)"/><rect x="5.90" y="0" width="4.2" height="4.48" fill="#afb1b3" transform="rotate(135 8.0 8.0)"/><rect x="5.90" y="0" width="4.2" height="4.48" fill="#afb1b3" transform="rotate(180 8.0 8.0)"/><rect x="5.90" y="0" width="4.2" height="4.48" fill="#afb1b3" transform="rotate(225 8.0 8.0)"/><rect x="5.90" y="0" width="4.2" height="4.48" fill="#afb1b3" transform="rotate(270 8.0 8.0)"/><rect x="5.90" y="0" width="4.2" height="4.48" fill="#afb1b3" transform="rotate(315 8.0 8.0)"/><circle cx="8.0" cy="8.0" r="5.76" fill="#afb1b3"/><circle cx="8.0" cy="8.0" r="2.40" fill="#3c3f41"/></svg>
<div class="a" style="left:1860px;top:415px;width:16px;height:2px;background:#afb1b3;"></div>
<div class="a" style="left:36px;top:433px;width:1849px;height:534px;background:#2b2b2b;"></div>
<div class="a m" style="left:42.0px;top:434.85px;height:27px;line-height:27px;font-size:16.67px;color:#bbbbbb;transform:scaleY(1.041);transform-origin:0 12.25px;">Module                  Size  Used by    Not tainted</div>
<div class="a m" style="left:42.0px;top:462.32px;height:27px;line-height:27px;font-size:16.67px;color:#bbbbbb;transform:scaleY(1.041);transform-origin:0 12.25px;">bcmdhd               1048576  0</div>
<div class="a m" style="left:42.0px;top:489.79px;height:27px;line-height:27px;font-size:16.67px;color:#bbbbbb;transform:scaleY(1.041);transform-origin:0 12.25px;">root@RK356X:/# insmod data/dtsof.ko</div>
<div class="a m" style="left:42.0px;top:517.26px;height:27px;line-height:27px;font-size:16.67px;color:#bbbbbb;transform:scaleY(1.041);transform-origin:0 12.25px;">root@RK356X:/# dmesg | grep valueBy</div>
<div class="a m" style="left:42.0px;top:544.73px;height:27px;line-height:27px;font-size:16.67px;color:#bbbbbb;transform:scaleY(1.041);transform-origin:0 12.25px;">[  193.254204] valueByProperty: 102</div>
<div class="a m" style="left:42.0px;top:572.20px;height:27px;line-height:27px;font-size:16.67px;color:#bbbbbb;transform:scaleY(1.041);transform-origin:0 12.25px;">root@RK356X:/# dmesg | grep levels</div>
<div class="a m" style="left:42.0px;top:599.67px;height:27px;line-height:27px;font-size:16.67px;color:#bbbbbb;transform:scaleY(1.041);transform-origin:0 12.25px;">[ 2835.001102] brightness-levels count: 11</div>
<div class="a m" style="left:42.0px;top:627.14px;height:27px;line-height:27px;font-size:16.67px;color:#bbbbbb;transform:scaleY(1.041);transform-origin:0 12.25px;">[ 2835.001117] brightness-levels[0]: 0</div>
<div class="a m" style="left:42.0px;top:654.61px;height:27px;line-height:27px;font-size:16.67px;color:#bbbbbb;transform:scaleY(1.041);transform-origin:0 12.25px;">[ 2835.001128] brightness-levels[1]: 102</div>
<div class="a m" style="left:42.0px;top:682.08px;height:27px;line-height:27px;font-size:16.67px;color:#bbbbbb;transform:scaleY(1.041);transform-origin:0 12.25px;">[ 2835.001140] brightness-levels[2]: 204</div>
<div class="a m" style="left:42.0px;top:709.55px;height:27px;line-height:27px;font-size:16.67px;color:#bbbbbb;transform:scaleY(1.041);transform-origin:0 12.25px;">[ 2835.001151] brightness-levels[3]: 306</div>
<div class="a m" style="left:42.0px;top:737.02px;height:27px;line-height:27px;font-size:16.67px;color:#bbbbbb;transform:scaleY(1.041);transform-origin:0 12.25px;">[ 2835.001161] brightness-levels[4]: 408</div>
<div class="a m" style="left:42.0px;top:764.49px;height:27px;line-height:27px;font-size:16.67px;color:#bbbbbb;transform:scaleY(1.041);transform-origin:0 12.25px;">[ 2835.001172] brightness-levels[5]: 510</div>
<div class="a m" style="left:42.0px;top:791.96px;height:27px;line-height:27px;font-size:16.67px;color:#bbbbbb;transform:scaleY(1.041);transform-origin:0 12.25px;">[ 2835.001182] brightness-levels[6]: 612</div>
<div class="a m" style="left:42.0px;top:819.43px;height:27px;line-height:27px;font-size:16.67px;color:#bbbbbb;transform:scaleY(1.041);transform-origin:0 12.25px;">[ 2835.001193] brightness-levels[7]: 714</div>
<div class="a m" style="left:42.0px;top:846.90px;height:27px;line-height:27px;font-size:16.67px;color:#bbbbbb;transform:scaleY(1.041);transform-origin:0 12.25px;">[ 2835.001203] brightness-levels[8]: 816</div>
<div class="a m" style="left:42.0px;top:874.37px;height:27px;line-height:27px;font-size:16.67px;color:#bbbbbb;transform:scaleY(1.041);transform-origin:0 12.25px;">[ 2835.001213] brightness-levels[9]: 918</div>
<div class="a m" style="left:42.0px;top:901.84px;height:27px;line-height:27px;font-size:16.67px;color:#bbbbbb;transform:scaleY(1.041);transform-origin:0 12.25px;">[ 2835.001223] brightness-levels[10]: 1020</div>
<div class="a m" style="left:42.0px;top:929.31px;height:27px;line-height:27px;font-size:16.67px;color:#bbbbbb;transform:scaleY(1.041);transform-origin:0 12.25px;">root@RK356X:/# </div>
<div class="a" style="left:192px;top:929px;width:11px;height:28px;background:transparent;border:1.3px solid #c0c0c0"></div>
<div class="a" style="left:1872px;top:728px;width:10px;height:236px;background:#4f5254;"></div>
<div class="a" style="left:9px;top:967px;width:1895px;height:1px;background:#323232;"></div>
<div class="a" style="left:285px;top:968px;width:99px;height:28px;background:#2d2f30;"></div>
<svg class="a" style="left:49px;top:975px" width="14" height="16" viewBox="0 0 14 16"><path d="M2.5 1V16M2.5 11H10V5" stroke="#afb1b3" stroke-width="2.6" fill="none"/><path d="M6 6L10 1L14 6Z" fill="#afb1b3"/></svg>
<div class="a t" style="left:69.0px;top:965.00px;height:40px;line-height:40px;font-size:13.50px;color:#bbbbbb;transform:scaleY(1.031);transform-origin:0 50%;letter-spacing:0.225px;">Git</div>
<svg class="a" style="left:111px;top:976px" width="13" height="12" viewBox="0 0 13 12"><path d="M0 1.5H2.5M4 1.5H13M0 6H2.5M4 6H13M0 10.5H2.5M4 10.5H13" stroke="#afb1b3" stroke-width="2"/></svg>
<div class="a t" style="left:130.5px;top:965.00px;height:40px;line-height:40px;font-size:13.50px;color:#bbbbbb;transform:scaleY(1.031);transform-origin:0 50%;letter-spacing:-0.418px;">TODO</div>
<svg class="a" style="left:196px;top:976px" width="12" height="12" viewBox="0 0 12 12"><circle cx="6" cy="6" r="6" fill="#afb1b3"/><rect x="5" y="2.5" width="2" height="4.5" fill="#3c3f41"/><rect x="5" y="8" width="2" height="2" fill="#3c3f41"/></svg>
<div class="a t" style="left:215.3px;top:965.00px;height:40px;line-height:40px;font-size:13.50px;color:#bbbbbb;transform:scaleY(1.031);transform-origin:0 50%;letter-spacing:-0.075px;">Problems</div>
<svg class="a" style="left:300px;top:975px" width="14" height="13" viewBox="0 0 14 13"><rect x="0" y="0" width="14" height="13" fill="#afb1b3"/><path d="M2.5 3L5.5 5.5L2.5 8" stroke="#2d2f30" stroke-width="1.4" fill="none"/><path d="M6 9.5H11" stroke="#2d2f30" stroke-width="1.4"/></svg>
<div class="a t" style="left:320.4px;top:965.00px;height:40px;line-height:40px;font-size:13.50px;color:#e8e8e8;transform:scaleY(1.031);transform-origin:0 50%;letter-spacing:0.026px;">Terminal</div>
<svg class="a" style="left:396px;top:974px" width="18" height="17" viewBox="0 0 18 17"><circle cx="7" cy="7" r="5.5" fill="none" stroke="#afb1b3" stroke-width="2"/><path d="M7 4V7.5L9 9" stroke="#afb1b3" stroke-width="1.5" fill="none"/><path d="M9 8L17 12.5L9 17Z" fill="#afb1b3" stroke="#3c3f41"/></svg>
<div class="a t" style="left:418.3px;top:965.00px;height:40px;line-height:40px;font-size:13.50px;color:#bbbbbb;transform:scaleY(1.031);transform-origin:0 50%;letter-spacing:0.048px;">Profiler</div>
<div class="a" style="left:9px;top:996px;width:1895px;height:1px;background:#323232;"></div>
<svg class="a" style="left:16px;top:1000px" width="17" height="17" viewBox="0 0 17 17"><rect x="4.5" y="1" width="11" height="11" fill="none" stroke="#afb1b3" stroke-width="1.3"/><path d="M1.5 4V15.5H13" stroke="#afb1b3" stroke-width="1.3" fill="none"/></svg>
<div class="a t" style="left:43.5px;top:988.30px;height:40px;line-height:40px;font-size:16.50px;color:#bbbbbb;transform:scaleY(0.944);transform-origin:0 50%;letter-spacing:0.030px;">File pattern '*.apk' (from 'bundled' plugin) was reassigned to file type 'APK' by 'Android' plugin: You can confirm or revert reassigning pattern '*.apk' // Confirm reassign this pattern to fil... (today 21:1</div>
<div class="a t" style="left:1521.0px;top:989.60px;height:40px;line-height:40px;font-size:14.50px;color:#bbbbbb;transform:scaleY(1.074);transform-origin:0 50%;letter-spacing:0.553px;">59:19</div>
<div class="a t" style="left:1575.5px;top:989.60px;height:40px;line-height:40px;font-size:14.50px;color:#bbbbbb;transform:scaleY(1.074);transform-origin:0 50%;letter-spacing:-1.122px;">CRLF</div>
<div class="a t" style="left:1627.0px;top:989.60px;height:40px;line-height:40px;font-size:14.50px;color:#bbbbbb;transform:scaleY(1.074);transform-origin:0 50%;letter-spacing:0.230px;">UTF-8</div>
<div class="a t" style="left:1683.6px;top:989.60px;height:40px;line-height:40px;font-size:15.00px;color:#bbbbbb;transform:scaleY(1.039);transform-origin:0 50%;">4 sp</div>
<div class="a" style="left:1884px;top:73px;width:1px;height:894px;background:#323232;"></div>
<svg class="a" style="left:1889px;top:86px" width="15" height="16" viewBox="0 0 15 16"><ellipse cx="8" cy="3" rx="7" ry="2.5" fill="#afb1b3"/><path d="M1 5.5C1 8 15 8 15 5.5V8C15 10.5 1 10.5 1 8Z" fill="#afb1b3"/><path d="M1 10.5C1 13 15 13 15 10.5V13C15 15.5 1 15.5 1 13Z" fill="#afb1b3"/></svg>
<div class="a t" style="left:1896px;top:135.7px;height:23px;line-height:23px;font-size:14.2px;color:#bbbbbb;transform:translate(-50%,-50%) rotate(90deg)">Database</div>
<svg class="a" style="left:1889px;top:192px" width="15" height="15" viewBox="0 0 15 15"><path d="M3 2L9 1L14 6L11 13L5 14L1 9Z" fill="none" stroke="#afb1b3" stroke-width="2"/><path d="M5 5L10 10" stroke="#afb1b3" stroke-width="2"/></svg>
<div class="a t" style="left:1896px;top:237px;height:21px;line-height:21px;font-size:13.0px;color:#bbbbbb;transform:translate(-50%,-50%) rotate(90deg)">通义灵码</div>
<svg class="a" style="left:1700px;top:820px" width="204" height="201" viewBox="0 0 204 201">
<rect x="189" y="8" width="22" height="104" rx="9" fill="#f6f6f6" stroke="#2a2222" stroke-width="1.6"/>
<rect x="191" y="43" width="14" height="11" fill="#bcd5f5"/>
<g font-size="10.5" fill="#1e1e1e" font-weight="bold" font-family="Liberation Sans">
<text x="192" y="26">打</text><text x="192" y="38">跌</text><text x="192" y="52">搬</text><text x="192" y="64">打</text><text x="192" y="76">摸</text><text x="192" y="88">吃</text></g>
<circle cx="203" cy="97" r="5" fill="none" stroke="#333" stroke-width="2"/>
<text x="193" y="134" font-size="13" fill="#f4f4f4" font-weight="bold" font-family="Liberation Sans">禾</text>
<path d="M197 141L201 138H204V150H199Z" fill="#7cc2f0"/>
<defs><linearGradient id="armg" x1="0" y1="0" x2="1" y2="0"><stop offset="0" stop-color="#ddd5d1"/><stop offset=".45" stop-color="#b9b2b0"/><stop offset=".75" stop-color="#8f8988"/><stop offset="1" stop-color="#9b9594"/></linearGradient></defs>
<path d="M12 201C8 182 14 158 26 140C34 128 42 120 50 116L118 118C124 135 124 170 121 201Z" fill="#e6ddd9" stroke="#2e2222" stroke-width="2.5"/>
<path d="M11 186C16 176 28 172 40 175C52 179 60 190 61 201H13C11 196 10 191 11 186Z" fill="#aaa4a3"/>
<path d="M60 119C80 116 108 116 121 121C130 128 128 140 116 145C104 149 86 150 70 150L62 140Z" fill="url(#armg)"/>
<path d="M62 120C80 117 106 116 120 121" fill="none" stroke="#4a4040" stroke-width="2"/>
<path d="M69 150C86 151 104 149 118 141" fill="none" stroke="#4a4040" stroke-width="2"/>
<path d="M48 118C30 110 26 95 30 85C26 72 32 58 44 52C50 40 68 34 86 36C104 32 126 40 134 52C144 58 148 72 144 84C150 98 142 112 128 118C104 126 72 126 48 118Z" fill="#ffffff" stroke="#2e2222" stroke-width="2.2"/>
<circle cx="49" cy="54" r="6" fill="#e6dcd6"/>
<circle cx="134" cy="62" r="5" fill="#e6dcd6"/>
<ellipse cx="78" cy="92" rx="10" ry="7" fill="#fbd1d3"/>
<ellipse cx="132" cy="92" rx="10" ry="7" fill="#fbd1d3"/>
<ellipse cx="84" cy="82" rx="4.5" ry="5" fill="#1a1212"/>
<ellipse cx="125" cy="82" rx="4" ry="4.5" fill="#1a1212"/>
<ellipse cx="106" cy="83" rx="7.5" ry="7" fill="#1a1212"/>
<circle cx="108" cy="80" r="1.8" fill="#fff"/>
<path d="M106 90V103M106 103L102 108M106 103L110 108" stroke="#2e2222" stroke-width="1.6" fill="none"/>
<g fill="#e8877e" stroke="#3a1d1b" stroke-width="2.2">
<path d="M118 122L150 126L149 142L118 139Z"/>
<rect x="119" y="148" width="48" height="19" rx="2"/>
<rect x="130" y="166" width="48" height="19" rx="2"/>
<rect x="64" y="181" width="104" height="25" rx="2"/>
</g>
<path d="M122 150H164M133 168H175M67 183H165" stroke="#f3a49c" stroke-width="2"/>
<path d="M185 182L189 188L196 187L193 194L197 200L190 200L186 206L182 200L175 200L179 194L176 187L182 188Z" fill="#6f5cf7"/>
<path d="M180 190L192 190L183 201" fill="none" stroke="#fff" stroke-width="1.8"/>
</svg>
<svg class="a" style="left:0;top:0" width="1904" height="1021"><polygon points="1398.3,664.8 1134.5,276.1 1139.2,276.4 1123.0,267.0 1126.1,285.5 1127.5,280.9 1397.7,665.2" fill="#fb3535"/><polygon points="1389.9,655.6 485.2,783.3 487.2,779.9 472.0,790.0 489.5,795.3 486.5,792.7 1390.1,656.4" fill="#fb3535"/></svg>
</body></html>
